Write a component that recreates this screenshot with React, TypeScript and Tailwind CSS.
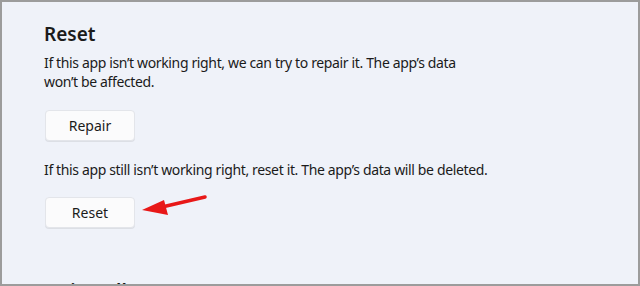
import React from 'react';

const ArrowPointer: React.FC = () => (
  <svg className="absolute left-[136px] top-[189px]" width="72" height="28" viewBox="0 0 72 28">
    <line x1="67" y1="6" x2="24" y2="16" stroke="#e81818" strokeWidth="3.5" strokeLinecap="round" />
    <polygon points="4,19 26,9 30,24" fill="#e81818" />
  </svg>
);

const SettingsButton: React.FC<{ label: string }> = ({ label }) => (
  <button className="w-[90px] h-[31px] ml-px rounded-[4px] bg-[#fbfbfc] border border-[#e3e5ea] shadow-[0_1px_0_rgba(0,0,0,0.08)] text-[14px] text-[#1b1b1b]">
    {label}
  </button>
);

export default function App() {
  return (
    <div
      className="relative w-[640px] h-[286px] overflow-hidden border-2 border-[#9c9c9c] bg-[#eff2f9] text-[#1b1b1b]"
      style={{ fontFamily: '"Segoe UI", "Noto Sans", "Open Sans", sans-serif' }}
    >
      <div className="pl-[42px] pt-[19px] flex flex-col">
        <h2 className="text-[19px] font-semibold leading-[26px]">Reset</h2>
        <p className="mt-[6px] text-[14px] leading-[19px] tracking-[-0.36px]">
          <span className="block">If this app isn’t working right, we can try to repair it. The app’s data</span>
          <span className="block">won’t be affected.</span>
        </p>
        <div className="mt-[19px]">
          <SettingsButton label="Repair" />
        </div>
        <p className="mt-[19px] text-[14px] leading-[19px] tracking-[-0.36px]">
          If this app still isn’t working right, reset it. The app’s data will be deleted.
        </p>
        <div className="mt-[18px]">
          <SettingsButton label="Reset" />
        </div>
        <h2 className="mt-[50px] text-[19px] font-semibold leading-[26px]">Uninstall</h2>
      </div>
      <ArrowPointer />
    </div>
  );
}
